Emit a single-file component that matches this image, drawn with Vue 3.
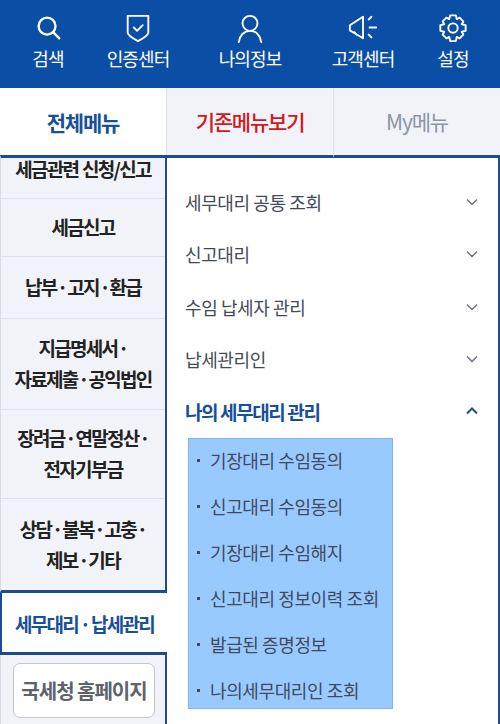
<template>
  <div class="page">
    <header class="top">
      <a v-for="t in topMenu" :key="t.label" class="top-item">
        <svg class="top-icon" viewBox="0 0 32 32" fill="none" stroke="#fff" stroke-width="2" stroke-linecap="round" stroke-linejoin="round" v-html="t.icon"></svg>
        <span>{{ t.label }}</span>
      </a>
    </header>
    <nav class="tabs">
      <div class="tab active">전체메뉴</div>
      <div class="tab old">기존메뉴보기</div>
      <div class="tab my">My메뉴</div>
    </nav>
    <div class="body">
      <aside class="side">
        <div class="side-list">
          <div class="side-item first">세금관련 신청/신고</div>
          <div
            v-for="s in sideMenu"
            :key="s.text"
            class="side-item"
            :style="{ height: s.h + 'px' }"
          >
            <span v-html="s.text"></span>
          </div>
        </div>
        <div class="side-active">세무대리 · 납세관리</div>
        <div class="side-foot">
          <button class="home-btn">국세청 홈페이지</button>
        </div>
      </aside>
      <main class="panel">
        <ul class="menu">
          <li v-for="m in menu" :key="m" class="menu-row">
            <span>{{ m }}</span>
            <svg class="chev" viewBox="0 0 14 8" fill="none" stroke="#6b7280" stroke-width="1.5"><path d="M2 1.500l5 5 5-5" /></svg>
          </li>
          <li class="menu-row open">
            <span>나의 세무대리 관리</span>
            <svg class="chev" viewBox="0 0 14 8" fill="none" stroke="#1f4e8c" stroke-width="2"><path d="M2 6.500l5-5 5 5" /></svg>
          </li>
        </ul>
        <ul class="sub">
          <li v-for="s in subMenu" :key="s"><i></i>{{ s }}</li>
        </ul>
      </main>
    </div>
  </div>
</template>

<script setup>
const topMenu = [
  {
    label: '검색',
    icon: '<circle cx="15" cy="14" r="9" stroke-width="2.500"/><path d="M22 21l6 6" stroke-width="2.500"/>',
  },
  {
    label: '인증센터',
    icon: '<path d="M5 3h22v18c0 2.500-5.500 6-11 9-5.500-3-11-6.500-11-9z"/><path d="M11.500 15.500l3.500 3.500 6-6"/>',
  },
  {
    label: '나의정보',
    icon: '<circle cx="16" cy="11" r="8"/><path d="M4 31c1-7 5.500-12 12-12s11 5 12 12"/>',
  },
  {
    label: '고객센터',
    icon: '<path d="M2 13l14-9v23L2 18.500z"/><path d="M7 20.500l2 2.500"/><path d="M22 7l3-3M23 15.500h7M22 23l3 3" />',
  },
  {
    label: '설정',
    icon: '<path d="M13 2.500h6l1 4 3-1.500 4 4-1.700 3 4.200 1v6l-4.200 1 1.700 3-4 4-3-1.500-1 4.500h-6l-1-4.500-3 1.500-4-4 1.700-3-4.200-1v-6l4.200-1-1.700-3 4-4 3 1.500z"/><circle cx="16" cy="16" r="5"/>',
  },
];

const sideMenu = [
  { text: '세금신고', h: 58 },
  { text: '납부 · 고지 · 환급', h: 62 },
  { text: '지급명세서 ·<br>자료제출 · 공익법인', h: 91 },
  { text: '장려금 · 연말정산 ·<br>전자기부금', h: 89 },
  { text: '상담 · 불복 · 고충 ·<br>제보 · 기타', h: 92 },
];

const menu = ['세무대리 공통 조회', '신고대리', '수임 납세자 관리', '납세관리인'];

const subMenu = [
  '기장대리 수임동의',
  '신고대리 수임동의',
  '기장대리 수임해지',
  '신고대리 정보이력 조회',
  '발급된 증명정보',
  '나의세무대리인 조회',
];
</script>

<style>
html,
body {
  margin: 0;
  background: #fff;
}
</style>

<style scoped>
.page {
  width: 500px;
  height: 724px;
  overflow: hidden;
  font-family: 'Noto Sans CJK KR', 'Noto Sans', sans-serif;
  display: flex;
  flex-direction: column;
}

.top {
  height: 88px;
  flex: none;
  background: #0b4ea6;
  display: grid;
  grid-template-columns: 96px 84px 140px 86px 94px;
  box-sizing: border-box;
  padding-top: 13px;
}
.top-item {
  display: flex;
  flex-direction: column;
  align-items: center;
  color: #fff;
  font-size: 18px;
  letter-spacing: -0.9px;
  line-height: 24px;
  gap: 3px;
}
.top-icon {
  width: 30px;
  height: 30px;
}

.tabs {
  height: 70px;
  flex: none;
  display: flex;
}
.tab {
  flex: 1;
  display: flex;
  align-items: center;
  justify-content: center;
  padding-bottom: 2px;
  background: #f1f3f9;
  border-bottom: 3px solid #1c4b8f;
  border-left: 1px solid #dfe2e8;
  font-size: 21px;
  letter-spacing: -1.2px;
  font-weight: 500;
}
.tab.active {
  flex: none;
  width: 166px;
  background: #fff;
  color: #16509c;
  font-weight: 700;
  border-left: 0;
  border-bottom: 0;
}
.tab.old {
  color: #d21920;
}
.tab.my {
  color: #8b95a5;
  font-weight: 400;
}

.body {
  flex: 1;
  display: flex;
  min-height: 0;
}

.side {
  width: 167px;
  flex: none;
  margin-top: -3px;
  display: flex;
  flex-direction: column;
  background: #f1f3f8;
  color: #222;
  box-sizing: border-box;
}
.side-list {
  border-top: 3px solid #1c4b8f;
  border-right: 2px solid #1c4b8f;
  border-bottom: 3px solid #1c4b8f;
  border-left: 1px solid #d8dbe2;
}
.side-item {
  display: flex;
  align-items: center;
  justify-content: center;
  padding-bottom: 2px;
  text-align: center;
  font-size: 19px;
  line-height: 31px;
  font-weight: 700;
  letter-spacing: -1.7px;
  word-spacing: -2px;
  border-top: 1px solid #dde0e6;
  box-sizing: border-box;
}
.side-item.first {
  border-top: 0;
  height: 40px;
  line-height: 22px;
  align-items: flex-start;
  word-spacing: 1px;
}
.side-active {
  height: 57px;
  flex: none;
  display: flex;
  align-items: center;
  justify-content: center;
  padding-top: 2px;
  background: #fff;
  border: solid #1c4b8f;
  border-width: 0 0 3px 2px;
  color: #16509c;
  font-size: 19px;
  font-weight: 700;
  letter-spacing: -1.7px;
  word-spacing: -1px;
}
.side-foot {
  flex: 1;
  border-right: 2px solid #1c4b8f;
  border-left: 1px solid #d8dbe2;
  padding: 8px 10px 0 12px;
}
.home-btn {
  width: 142px;
  height: 55px;
  box-sizing: border-box;
  padding: 0;
  background: #fff;
  border: 1px solid #c4c6cc;
  border-radius: 7px;
  font: inherit;
  font-size: 20px;
  font-weight: 700;
  letter-spacing: -1px;
  color: #5d626b;
}

.panel {
  flex: 1;
  border-right: 2px solid #1c4b8f;
  padding: 18px 0 0 18px;
}
.menu {
  list-style: none;
  margin: 0;
  padding: 0;
}
.menu-row {
  height: 52.3px;
  display: flex;
  align-items: center;
  justify-content: space-between;
  padding-right: 19px;
  font-size: 18px;
  color: #444a55;
  letter-spacing: -0.4px;
}
.menu-row.open {
  color: #16509c;
  font-size: 19px;
  font-weight: 700;
  letter-spacing: -1.4px;
}
.chev {
  width: 14px;
  height: 8px;
}
.sub {
  list-style: none;
  margin: 0.5px 0 0 3px;
  width: 205px;
  height: 271px;
  box-sizing: border-box;
  padding: 0 0 0 8px;
  background: #99caff;
  border: 1px solid #85b5e8;
}
.sub li {
  height: 46px;
  box-sizing: border-box;
  padding-bottom: 3px;
  display: flex;
  align-items: center;
  font-size: 18px;
  color: #3f4a5c;
  letter-spacing: -0.4px;
}
.sub i {
  width: 3px;
  height: 3px;
  background: #3f4a5c;
  margin-right: 10px;
}
</style>
